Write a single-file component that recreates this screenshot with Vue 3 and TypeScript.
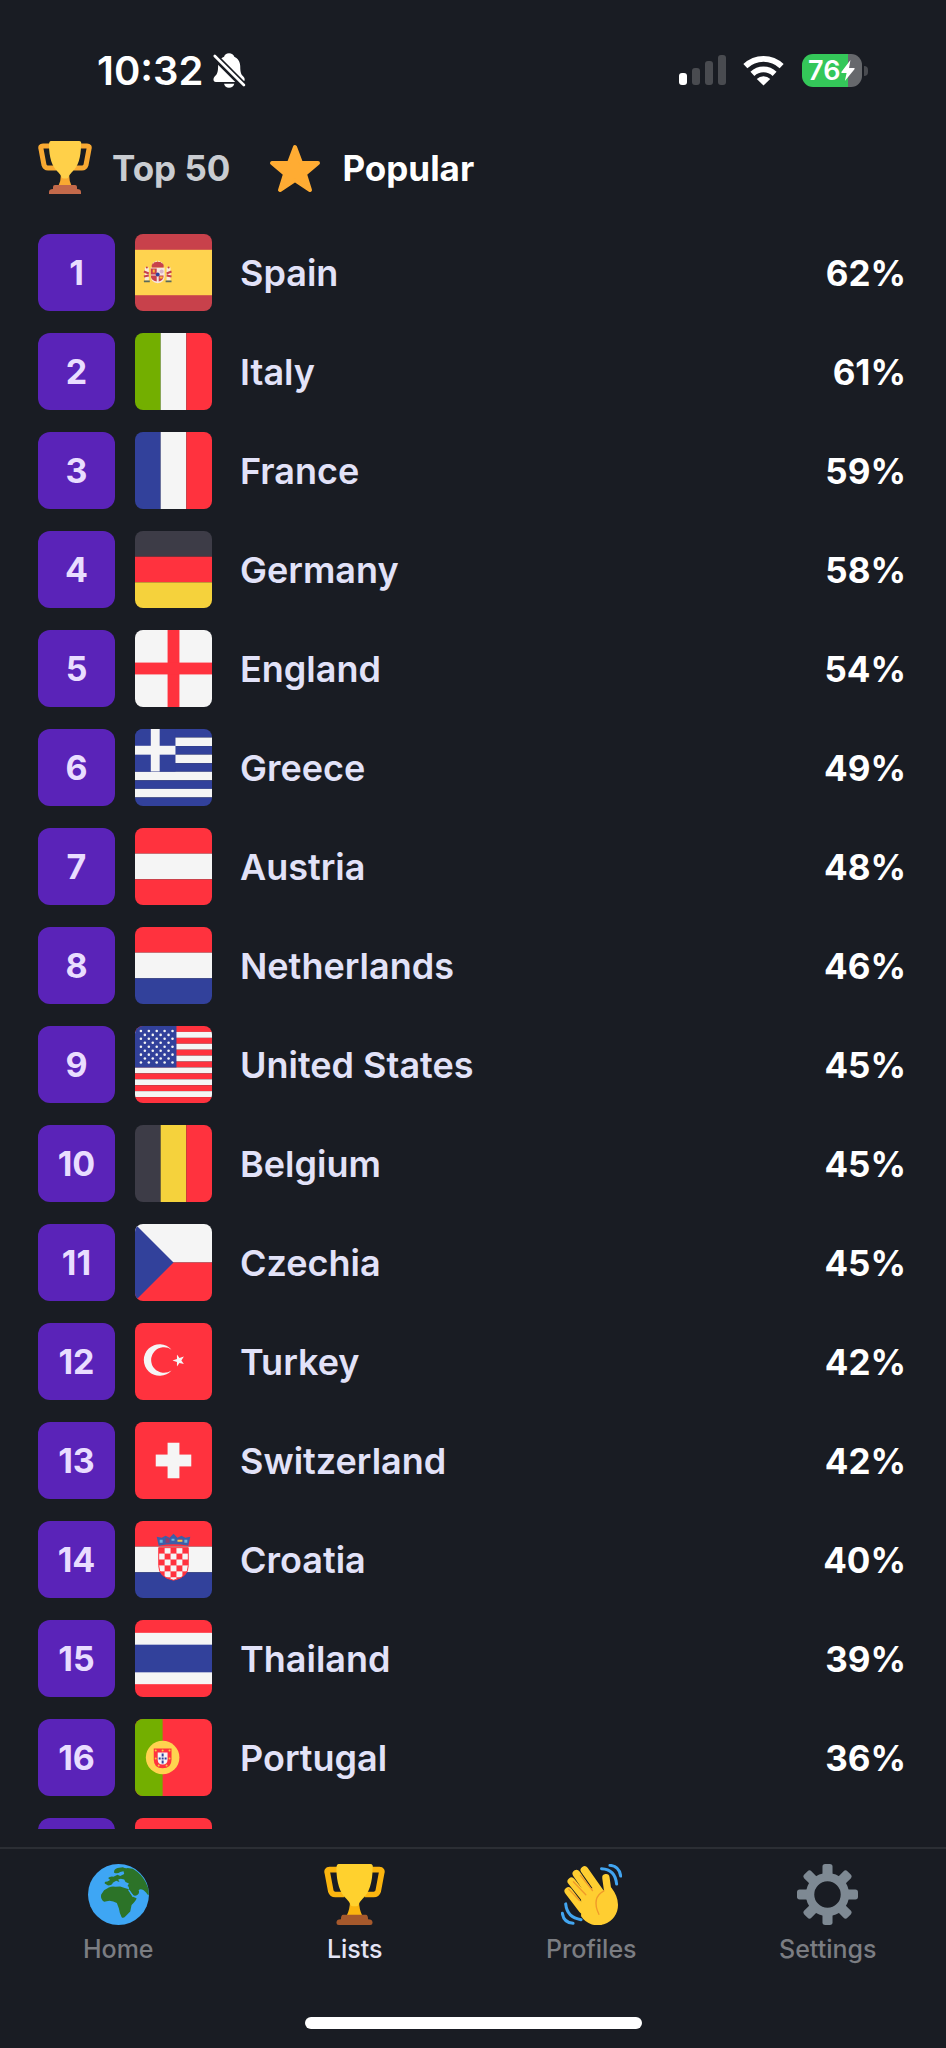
<script setup lang="ts">
import { ref } from 'vue'

interface Band {
  x: number
  y: number
  w: number
  h: number
  fill: string
}

interface Country {
  code: string
  name: string
  percent: number
  bands: Band[]
}

const RED = '#ff323e'
const WHITE = '#f5f5f5'
const BLUE = '#32419b'
const GREEN = '#73af00'
const DARK = '#3d3c47'
const GOLD = '#f5d23c'
const SIZE = 78

function across(...fills: string[]): Band[] {
  const h = SIZE / fills.length
  return fills.map((fill, i) => ({ x: 0, y: i * h, w: SIZE, h, fill }))
}

function down(...fills: string[]): Band[] {
  const w = SIZE / fills.length
  return fills.map((fill, i) => ({ x: i * w, y: 0, w, h: SIZE, fill }))
}

const box = (x: number, y: number, w: number, h: number, fill: string): Band => ({ x, y, w, h, fill })

const usStripes = Array.from({ length: 13 }, (_, i) => (i % 2 ? WHITE : RED))
const greekStripes = Array.from({ length: 9 }, (_, i) => (i % 2 ? WHITE : BLUE))

const usStars = Array.from({ length: 9 }, (_, row) =>
  Array.from({ length: row % 2 ? 4 : 5 }, (_, col) => ({
    x: 6 + col * 8 + (row % 2 ? 4 : 0),
    y: 5 + row * 4,
  })),
).flat()

const croatianChecks = Array.from({ length: 30 }, (_, i) => i)
  .filter((i) => (Math.floor(i / 5) + (i % 5)) % 2 === 1)
  .map((i) => ({ x: 24 + (i % 5) * 6, y: 27 + Math.floor(i / 5) * 6 }))

const countries: Country[] = [
  { code: 'es', name: 'Spain', percent: 62, bands: [box(0, 0, 78, 78, '#c8414b'), box(0, 16, 78, 46, '#ffd34f')] },
  { code: 'it', name: 'Italy', percent: 61, bands: down(GREEN, WHITE, RED) },
  { code: 'fr', name: 'France', percent: 59, bands: down(BLUE, WHITE, RED) },
  { code: 'de', name: 'Germany', percent: 58, bands: across(DARK, RED, GOLD) },
  {
    code: 'en',
    name: 'England',
    percent: 54,
    bands: [box(0, 0, 78, 78, WHITE), box(33, 0, 12, 78, RED), box(0, 33, 78, 12, RED)],
  },
  {
    code: 'gr',
    name: 'Greece',
    percent: 49,
    bands: [...across(...greekStripes), box(0, 0, 41, 43, BLUE), box(16, 0, 9, 43, WHITE), box(0, 17, 41, 9, WHITE)],
  },
  { code: 'at', name: 'Austria', percent: 48, bands: across(RED, WHITE, RED) },
  { code: 'nl', name: 'Netherlands', percent: 46, bands: across(RED, WHITE, BLUE) },
  { code: 'us', name: 'United States', percent: 45, bands: [...across(...usStripes), box(0, 0, 42, 42, BLUE)] },
  { code: 'be', name: 'Belgium', percent: 45, bands: down(DARK, GOLD, RED) },
  { code: 'cz', name: 'Czechia', percent: 45, bands: across(WHITE, RED) },
  { code: 'tr', name: 'Turkey', percent: 42, bands: across(RED) },
  {
    code: 'ch',
    name: 'Switzerland',
    percent: 42,
    bands: [box(0, 0, 78, 78, RED), box(33, 21, 12, 36, WHITE), box(21, 33, 36, 12, WHITE)],
  },
  { code: 'hr', name: 'Croatia', percent: 40, bands: across(RED, WHITE, BLUE) },
  {
    code: 'th',
    name: 'Thailand',
    percent: 39,
    bands: [box(0, 0, 78, 78, RED), box(0, 13, 78, 52, WHITE), box(0, 25, 78, 28, BLUE)],
  },
  { code: 'pt', name: 'Portugal', percent: 36, bands: [box(0, 0, 78, 78, RED), box(0, 0, 28, 78, GREEN)] },
]

const filters = [
  { id: 'top', label: 'Top 50' },
  { id: 'popular', label: 'Popular' },
]
const activeFilter = ref('popular')

const tabs = ['Home', 'Lists', 'Profiles', 'Settings']
const activeTab = ref('Lists')
const gearAngles = [0, 45, 90, 135, 180, 225, 270, 315]
</script>

<template>
  <div class="app">
    <header class="status">
      <span class="time">10:32</span>
      <svg class="bell" viewBox="0 0 99 106" aria-hidden="true">
        <path
          d="M48 1C40 1 35 5 33 11C21 16 15 27 15 40C15 58 12 64 4 72C-1 78 0 88 8 88H88C96 88 98 78 92 72C84 64 82 58 82 40C82 27 75 16 64 11C62 5 56 1 48 1Z"
          fill="#fff"
        />
        <path d="M33 93H64C62 101 56 105 48 105C40 105 35 101 33 93Z" fill="#fff" />
        <path d="M-4 2L102 108" stroke="#191c23" stroke-width="21" />
        <path d="M5 9L93 97" stroke="#fff" stroke-width="8" stroke-linecap="round" />
      </svg>
      <span class="spacer"></span>
      <svg class="signal" viewBox="0 0 48 31" aria-hidden="true">
        <rect x="0" y="18" width="8" height="12" rx="3" fill="#fff" />
        <rect x="13" y="13" width="8" height="17" rx="3" fill="#494b50" />
        <rect x="26" y="6" width="8" height="24" rx="3" fill="#494b50" />
        <rect x="39" y="0" width="8" height="30" rx="3" fill="#494b50" />
      </svg>
      <svg class="wifi" viewBox="0 0 122 92" aria-hidden="true">
        <g fill="none" stroke="#fff" stroke-width="17">
          <path d="M7 33A78 78 0 0 1 115 33" />
          <path d="M28 56A48 48 0 0 1 94 56" />
        </g>
        <path d="M61 91L41 71A29 29 0 0 1 81 71Z" fill="#fff" />
      </svg>
      <div class="battery">
        <span class="cell">
          <span class="level">76</span>
          <svg class="bolt" viewBox="0 0 40 60" aria-hidden="true">
            <path d="M27 0L1 34Q0 37 3 37H16L11 60L39 26Q40 23 37 23H23Z" fill="#fff" />
          </svg>
        </span>
        <span class="tip"></span>
      </div>
    </header>

    <div class="filters">
      <button
        v-for="f in filters"
        :key="f.id"
        type="button"
        class="filter"
        :class="{ active: activeFilter === f.id }"
        @click="activeFilter = f.id"
      >
        <svg v-if="f.id === 'top'" class="filter-icon" viewBox="0 0 54 54" aria-hidden="true">
          <path
            d="M13 5H5Q2 5 3 8L6 24Q7 27 10 27H18M41 5H49Q52 5 51 8L48 24Q47 27 44 27H36"
            fill="none"
            stroke="#f9a932"
            stroke-width="5"
          />
          <path d="M23 33H31Q31 40 34 46H20Q23 40 23 33Z" fill="#f9a932" />
          <path d="M13 0H41Q44 0 43 4C43 16 40 26 34 31Q31 34 30 37Q27 38 24 37Q23 34 20 31C14 26 11 16 11 4Q11 0 13 0Z" fill="#ffd049" />
          <path d="M17 44H37Q39 44 39 46V48Q43 48 43 51V53H11V51Q11 48 15 48V46Q15 44 17 44Z" fill="#c3694a" />
        </svg>
        <svg v-else class="filter-icon" viewBox="0 0 54 54" aria-hidden="true">
          <path
            d="M27 6L33 22L50 22L37 33L42 49L27 39L12 49L17 33L4 22L21 22Z"
            fill="#ffac33"
            stroke="#ffac33"
            stroke-width="4"
            stroke-linejoin="round"
          />
        </svg>
        <span>{{ f.label }}</span>
      </button>
    </div>

    <ol class="list">
      <li v-for="(c, i) in countries" :key="c.code" class="row">
        <span class="rank">{{ i + 1 }}</span>
        <svg class="flag" viewBox="0 0 78 78" aria-hidden="true">
          <rect v-for="(b, j) in c.bands" :key="j" :x="b.x" :y="b.y" :width="b.w" :height="b.h" :fill="b.fill" />
          <g v-if="c.code === 'es'">
            <path d="M10 34H14V47H10ZM32 34H36V47H32Z" fill="#f7ead8" />
            <path d="M9 38L14 40M9 43L14 42M37 38L32 40M37 43L32 42" stroke="#c8414b" stroke-width="2" />
            <path d="M9 48H15M31 48H37" stroke="#5a6a5c" stroke-width="2" />
            <circle cx="12" cy="34" r="1" fill="#c8414b" />
            <circle cx="34" cy="34" r="1" fill="#c8414b" />
            <path d="M16 34H30V43Q30 49 23 50Q16 49 16 43Z" fill="#f5e6e0" />
            <path d="M16 35H22V41H16ZM16 42H22V48Q16 47 16 42ZM24 42H29Q29 47 24 48Z" fill="#c8414b" />
            <path d="M18 36H20V39H18ZM25 43H28V45H25Z" fill="#ffb636" />
            <circle cx="27" cy="38" r="2" fill="#d9b5c9" />
            <circle cx="23" cy="41" r="2" fill="#32419b" />
            <path d="M17 34Q16 28 23 28Q30 28 29 34Z" fill="#c8414b" />
            <path d="M18 30Q23 25 28 30" fill="none" stroke="#f5e6d0" stroke-width="1" stroke-dasharray="2 1" />
          </g>
          <g v-else-if="c.code === 'us'">
            <circle v-for="(s, j) in usStars" :key="j" :cx="s.x" :cy="s.y" r="1.3" fill="#f5f5f5" />
          </g>
          <path v-else-if="c.code === 'cz'" d="M0 0L39 39L0 78Z" fill="#32419b" />
          <g v-else-if="c.code === 'tr'" fill="#f5f5f5">
            <path d="M37 27A16 16 0 1 0 37 48A13 13 0 1 1 37 27Z" />
            <path d="M38 38L42.5 36.5L42.5 32L45 35.500L49.500 34L47 38L49.500 41.500L45 40.500L42.500 44L42.500 39.500Z" />
          </g>
          <g v-else-if="c.code === 'hr'">
            <clipPath id="shield">
              <path d="M24 27H54V45Q54 57 39 60Q24 57 24 45Z" />
            </clipPath>
            <g clip-path="url(#shield)">
              <rect x="24" y="26" width="30" height="36" fill="#ff323e" />
              <rect v-for="(s, j) in croatianChecks" :key="j" :x="s.x" :y="s.y" width="6" height="6" fill="#f5f5f5" />
            </g>
            <path d="M24 27H54V45Q54 57 39 60Q24 57 24 45Z" fill="none" stroke="#ff323e" />
            <path d="M22 16L27 17L31 15L35 17L39 13L43 17L47 15L51 17L56 16L54 25Q39 22 24 25Z" fill="#3d5fa8" />
            <path d="M31 17L35 18V22L31 22ZM44 18H48V21H44Z" fill="#8f3d6d" />
            <path d="M25 19H28V22H25ZM37 18H40V20H37ZM50 19H53V22H50Z" fill="#6fb7dd" />
            <path d="M43 19H48V21H43Z" fill="#f5c84a" />
          </g>
          <g v-else-if="c.code === 'pt'">
            <circle cx="28" cy="39" r="17" fill="#ffd34f" />
            <path d="M19 30H37V41Q37 50 28 50Q19 50 19 41Z" fill="#ff323e" />
            <path d="M23 34H33V41Q33 46 28 46Q23 46 23 41Z" fill="#f5f5f5" />
            <path d="M27 35H29V38H27ZM27 39H29V41H27ZM27 42H29V45H27ZM24 39H26V41H24ZM30 39H32V41H30Z" fill="#32419b" />
            <g fill="#f5d23c">
              <circle cx="21" cy="32" r="1" />
              <circle cx="28" cy="32" r="1" />
              <circle cx="35" cy="32" r="1" />
              <circle cx="21" cy="40" r="1" />
              <circle cx="35" cy="40" r="1" />
              <circle cx="24" cy="47" r="1" />
              <circle cx="32" cy="47" r="1" />
            </g>
          </g>
        </svg>
        <span class="name">{{ c.name }}</span>
        <span class="percent">{{ c.percent }}%</span>
      </li>
      <li class="row" aria-hidden="true">
        <span class="rank"></span>
        <svg class="flag" viewBox="0 0 78 78">
          <rect width="78" height="78" fill="#ff323e" />
        </svg>
      </li>
    </ol>

    <footer class="bottom">
      <nav class="tabs">
        <button
          v-for="t in tabs"
          :key="t"
          type="button"
          class="tab"
          :class="{ active: activeTab === t }"
          @click="activeTab = t"
        >
          <svg v-if="t === 'Home'" class="tab-icon" viewBox="0 0 182 182" aria-hidden="true">
            <circle cx="91" cy="91" r="91" fill="#3ea6f4" />
            <g fill="#2c7328">
              <path
                d="M39 92L48 78L62 70Q72 65 82 68L96 67Q106 70 112 72L122 75L127 88L134 98L145 102Q143 110 130 122L126 142L112 156Q104 164 100 158Q94 146 92 132L86 116Q76 112 64 110L48 113Q37 106 39 92Z"
              />
              <path
                d="M78 26Q76 16 88 12L104 10Q112 14 118 12L134 14Q160 30 172 54Q183 74 181 93Q176 92 174 86L166 78Q156 72 151 78Q155 86 148 92Q138 98 133 90L122 77Q124 68 118 66L122 58L112 54L108 46L98 44L90 46L94 54L84 50L74 56Q72 64 60 64L50 58Q48 52 58 52L66 48L60 42Q66 36 76 38L88 32L96 36L108 30L106 22L96 24Q88 30 78 26Z"
              />
            </g>
            <path d="M122 78L134 96" stroke="#3ea6f4" stroke-width="4" stroke-linecap="round" />
          </svg>
          <svg v-else-if="t === 'Lists'" class="tab-icon" viewBox="0 0 54 54" aria-hidden="true">
            <path
              d="M13 5H5Q2 5 3 8L6 24Q7 27 10 27H18M41 5H49Q52 5 51 8L48 24Q47 27 44 27H36"
              fill="none"
              stroke="#fbb50f"
              stroke-width="5"
            />
            <path d="M23 33H31Q31 40 34 46H20Q23 40 23 33Z" fill="#fbb50f" />
            <path d="M13 0H41Q44 0 43 4C43 16 40 26 34 31Q31 34 30 37Q27 38 24 37Q23 34 20 31C14 26 11 16 11 4Q11 0 13 0Z" fill="#ffd12e" />
            <path d="M17 45H37Q39 45 39 49Q43 49 43 52Q43 54 41 54H13Q11 54 11 52Q11 49 15 49Q15 45 17 45Z" fill="#a6592c" />
          </svg>
          <svg v-else-if="t === 'Profiles'" class="tab-icon" viewBox="0 0 182 182" aria-hidden="true">
            <g stroke="#ffce31" stroke-linecap="round" fill="none">
              <path d="M70 18L115 82M46 29L98 104M31 52L84 118M22 81L64 136" stroke-width="23" />
              <path d="M134 41L141 92" stroke-width="22" />
            </g>
            <path d="M60 80L112 68L128 80L150 70Q170 96 170 121A60 60 0 0 1 60 156Z" fill="#ffce31" />
            <g fill="none" stroke="#f09a2a" stroke-width="4" stroke-linecap="round">
              <path d="M58 34L94 79M37 53L74 92M23 75L55 109" />
              <path d="M128 80Q90 100 113 150" />
            </g>
            <g fill="none" stroke="#42a5f0" stroke-width="9" stroke-linecap="round">
              <path d="M121 14Q162 16 166 60M146 4Q174 6 178 36" />
              <path d="M14 119Q18 160 60 166M4 147Q8 175 36 177" />
            </g>
          </svg>
          <svg v-else class="tab-icon" viewBox="0 0 182 182" aria-hidden="true">
            <circle cx="91" cy="91" r="52" fill="none" stroke="#7e8993" stroke-width="25" />
            <rect
              v-for="a in gearAngles"
              :key="a"
              x="76"
              y="0"
              width="30"
              height="42"
              rx="8"
              fill="#7e8993"
              :transform="`rotate(${a} 91 91)`"
            />
          </svg>
          <span>{{ t }}</span>
        </button>
      </nav>
      <div class="home-bar"></div>
    </footer>
  </div>
</template>

<style>
body {
  margin: 0;
  background: #191c23;
}
</style>

<style scoped>
.app {
  display: flex;
  flex-direction: column;
  height: 100vh;
  overflow: hidden;
  background: #191c23;
  color: #fff;
  font-family: Inter, "Liberation Sans", sans-serif;
}

button {
  padding: 0;
  border: 0;
  background: none;
  font: inherit;
  cursor: pointer;
}

.status {
  display: flex;
  align-items: center;
  flex: none;
  height: 141px;
  padding: 0 78px 0 97px;
}

.time {
  font-size: 40px;
  font-weight: 600;
}

.bell {
  width: 33px;
  height: 35px;
  margin-left: 10px;
}

.spacer {
  flex: 1;
}

.signal {
  width: 48px;
  height: 31px;
}

.wifi {
  width: 41px;
  height: 31px;
  margin: 0 18px 0 16px;
}

.battery {
  display: flex;
  align-items: center;
  gap: 2px;
}

.cell {
  display: flex;
  align-items: center;
  box-sizing: border-box;
  width: 60px;
  height: 33px;
  padding-left: 6px;
  border-radius: 11px;
  background: linear-gradient(90deg, #34c759 76%, #66686c 76%);
}

.level {
  font-size: 27px;
  font-weight: 600;
  line-height: 33px;
}

.bolt {
  flex: none;
  width: 14px;
  height: 21px;
  margin-left: 1px;
}

.tip {
  width: 4px;
  height: 10px;
  border-radius: 0 5px 5px 0;
  background: #494b50;
}

.filters {
  display: flex;
  flex: none;
  gap: 38px;
  padding: 0 38px;
}

.filter {
  display: flex;
  align-items: center;
  gap: 20px;
  color: #c9ccd1;
  font-size: 35px;
  font-weight: 700;
  line-height: 54px;
}

.filter.active {
  color: #fff;
}

.filter-icon {
  width: 54px;
  height: 54px;
}

.list {
  display: flex;
  flex: 1;
  flex-direction: column;
  gap: 22px;
  min-height: 0;
  margin: 39px 0 18px;
  padding: 0 40px 0 38px;
  overflow: hidden;
  list-style: none;
}

.row {
  display: flex;
  flex: none;
  align-items: center;
  height: 77px;
}

.rank {
  width: 77px;
  height: 77px;
  border-radius: 12px;
  background: #5a23b8;
  color: #e9ddff;
  font-size: 34px;
  font-weight: 700;
  line-height: 77px;
  text-align: center;
}

.flag {
  width: 77px;
  height: 77px;
  margin-left: 20px;
  border-radius: 8px;
}

.name {
  flex: 1;
  margin-left: 28px;
  color: #e2e2f8;
  font-size: 36px;
  font-weight: 600;
}

.percent {
  font-size: 35px;
  font-weight: 700;
}

.bottom {
  display: flex;
  flex: none;
  flex-direction: column;
  align-items: center;
  box-sizing: border-box;
  height: 201px;
  border-top: 2px solid #2b2e34;
}

.tabs {
  display: flex;
  width: 100%;
  padding-top: 15px;
}

.tab {
  display: flex;
  flex: 1;
  flex-direction: column;
  align-items: center;
  gap: 8px;
  color: #7b7d82;
  font-size: 25px;
  font-weight: 500;
  line-height: 32px;
}

.tab.active {
  color: #e4e4f6;
}

.tab-icon {
  width: 61px;
  height: 61px;
}

.home-bar {
  width: 337px;
  height: 12px;
  margin: auto 0 19px;
  border-radius: 6px;
  background: #fff;
}
</style>
